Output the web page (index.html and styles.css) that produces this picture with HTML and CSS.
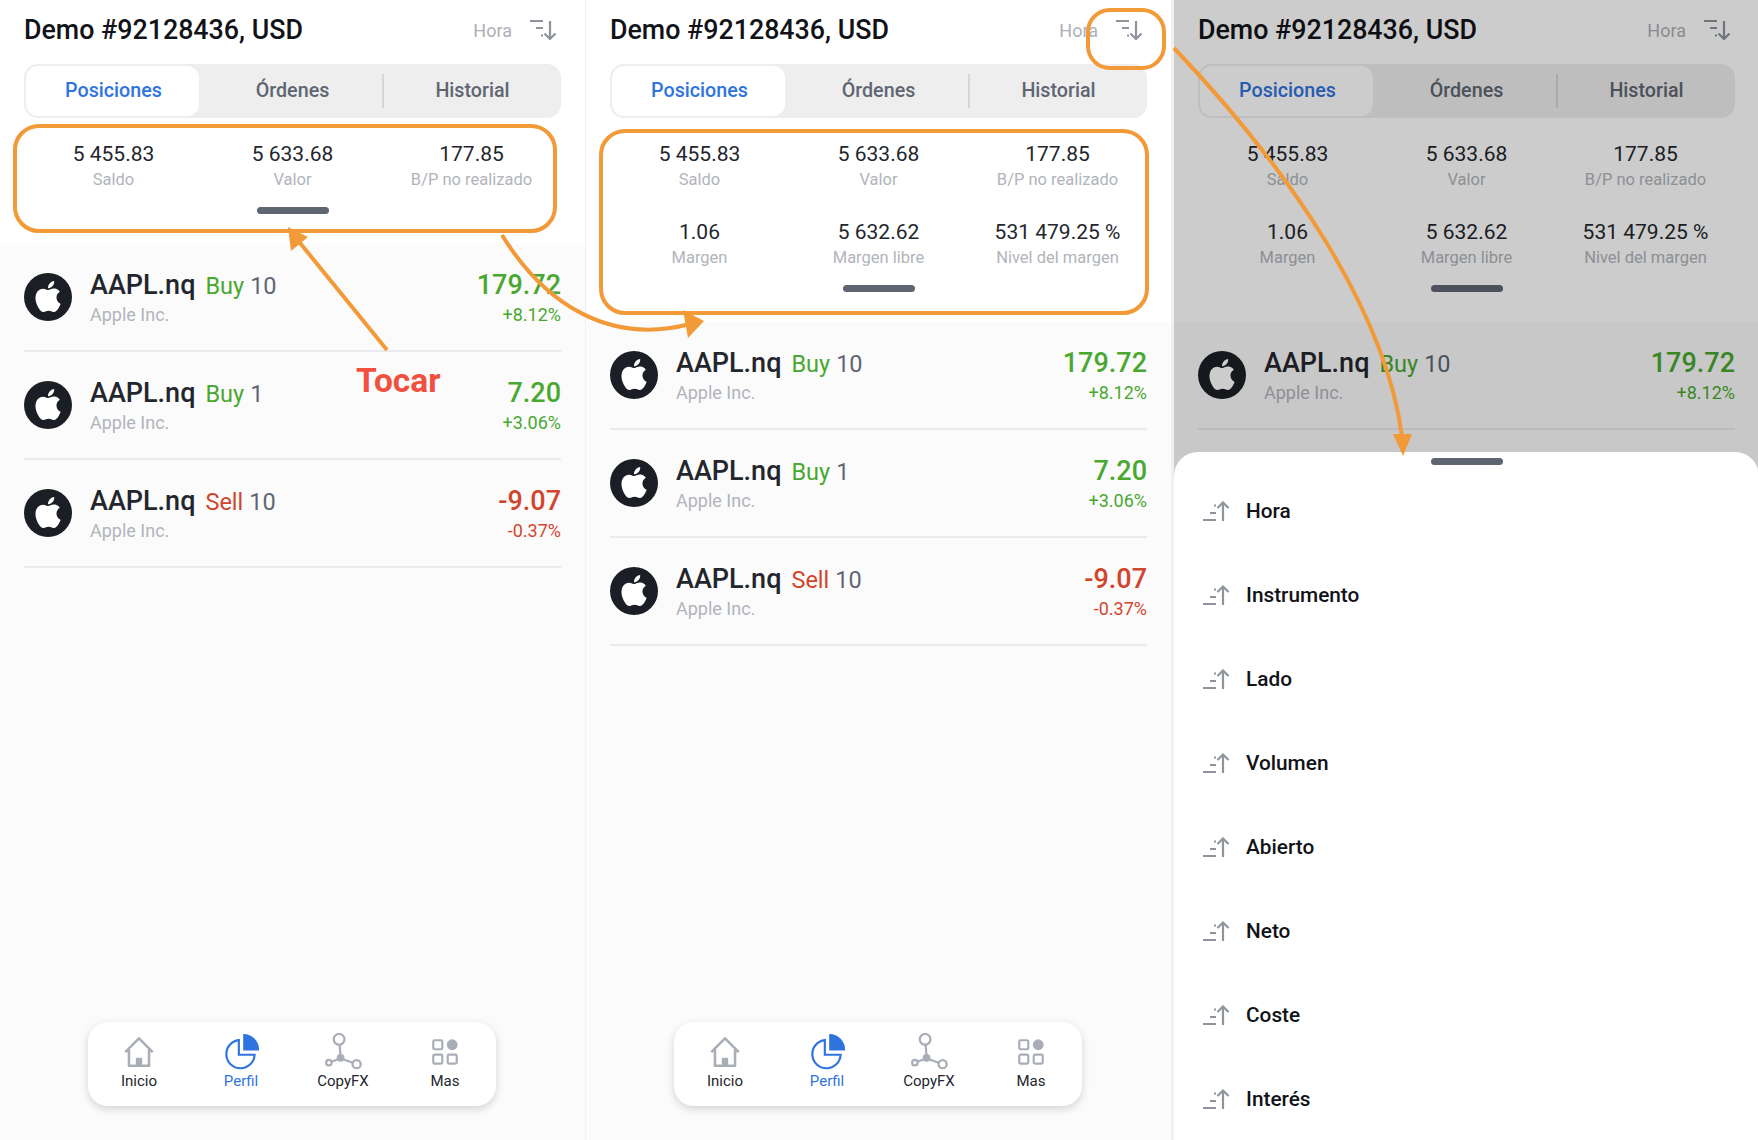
FILE: index.html
```html
<!DOCTYPE html>
<html lang="es">
<head>
    <meta charset="UTF-8">
    <meta name="viewport" content="width=device-width, initial-scale=1.0">
    <title>Posiciones</title>
    <link rel="stylesheet" href="styles.css">
</head>
<body>
    <!-- shared icons -->
    <svg class="icon-defs" width="0" height="0">
        <symbol id="i-apple" viewBox="0 0 48 48">
            <circle cx="24" cy="24" r="24" fill="#1b1e24"/>
            <path transform="translate(5.500 5) scale(1.55)" fill="#fff" d="M18.71 19.5c-.83 1.24-1.71 2.45-3.05 2.47-1.34.03-1.77-.79-3.29-.79-1.53 0-2 .77-3.27.82-1.31.05-2.3-1.32-3.14-2.53C4.25 17 2.94 12.45 4.7 9.39c.87-1.52 2.43-2.48 4.12-2.51 1.28-.02 2.5.87 3.29.87.78 0 2.26-1.07 3.81-.91.65.03 2.47.26 3.64 1.98-.09.06-2.17 1.28-2.15 3.81.03 3.02 2.65 4.03 2.68 4.04-.03.07-.42 1.44-1.38 2.83M13 3.5c.73-.83 1.94-1.46 2.94-1.5.13 1.17-.34 2.35-1.04 3.19-.69.85-1.83 1.51-2.95 1.42-.15-1.15.41-2.35 1.05-3.11z"/>
        </symbol>
        <symbol id="i-sort-down" viewBox="0 0 28 22">
            <g fill="none" stroke="#8e939c" stroke-width="2.200">
                <path d="M1 2h13M7 9h7M12 16.500h2"/>
                <path d="M21 2v18M15.500 14.500l5.500 5.500 5.500-5.500"/>
            </g>
        </symbol>
        <symbol id="i-sort-up" viewBox="0 0 28 22">
            <g fill="none" stroke="#8e939c" stroke-width="2.200">
                <path d="M1 20h13M8 13h6M12 5.500h2"/>
                <path d="M21 21V3M15.500 8l5.500-5.500L26.500 8"/>
            </g>
        </symbol>
        <symbol id="i-home" viewBox="-1.500 -2.500 35 35">
            <path d="M3 15.500 16 2.500l13 13M6.500 13v15.500h19V13" fill="none" stroke="#a9adb7" stroke-width="2.400" stroke-linejoin="round"/>
            <rect x="13" y="21" width="6" height="8" fill="#a9adb7"/>
        </symbol>
        <symbol id="i-profile" viewBox="0 0 34 34">
            <path d="M15 6.500A13 13 0 1 0 29.500 20H15z" fill="none" stroke="#2f74de" stroke-width="2"/>
            <path d="M19 1a14 14 0 0 1 14.500 15H19z" fill="#2f74de"/>
        </symbol>
        <symbol id="i-copy" viewBox="0 0 38 38">
            <g fill="none" stroke="#a9adb7" stroke-width="2.300">
                <circle cx="15" cy="6.500" r="5.500"/>
                <circle cx="33" cy="32" r="4.200"/>
                <circle cx="4.500" cy="30.500" r="2.800"/>
                <path d="M15.500 12l1 12M19 27l10 3.500M14 27l-7 2.500"/>
            </g>
            <circle cx="16.500" cy="25.500" r="4" fill="#a9adb7"/>
        </symbol>
        <symbol id="i-more" viewBox="-5.500 -5 41 41">
            <g fill="none" stroke="#a9adb7" stroke-width="2.400">
                <rect x="2" y="3" width="10" height="10" rx="1.500"/>
                <rect x="2" y="19" width="10" height="10" rx="1.500"/>
                <rect x="18" y="19" width="10" height="10" rx="1.500"/>
            </g>
            <circle cx="23" cy="8" r="6" fill="#a9adb7"/>
        </symbol>
    </svg>

    <main class="screens">

        <!-- collapsed summary -->
        <section class="panel">
            <header class="top-bar">
                <h1 class="account">Demo #92128436, USD</h1>
                <div class="sort"><span class="sort-label">Hora</span><svg class="sort-icon"><use href="#i-sort-down"/></svg></div>
            </header>
            <div class="tabs">
                <div class="tab active">Posiciones</div>
                <div class="tab">Órdenes</div>
                <div class="tab tab-split">Historial</div>
            </div>
            <div class="summary">
                <div class="stats">
                    <div class="stat"><div class="stat-value">5 455.83</div><div class="stat-label">Saldo</div></div>
                    <div class="stat"><div class="stat-value">5 633.68</div><div class="stat-label">Valor</div></div>
                    <div class="stat"><div class="stat-value">177.85</div><div class="stat-label">B/P no realizado</div></div>
                </div>
                <div class="handle"></div>
            </div>
            <div class="positions">
                <div class="position">
                    <svg class="logo"><use href="#i-apple"/></svg>
                    <div class="pos-info">
                        <div class="pos-title"><span class="symbol">AAPL.nq</span><span class="side up">Buy</span><span class="qty">10</span></div>
                        <div class="pos-name">Apple Inc.</div>
                    </div>
                    <div class="pos-result up"><div class="pos-value">179.72</div><div class="pos-pct">+8.12%</div></div>
                </div>
                <div class="position">
                    <svg class="logo"><use href="#i-apple"/></svg>
                    <div class="pos-info">
                        <div class="pos-title"><span class="symbol">AAPL.nq</span><span class="side up">Buy</span><span class="qty">1</span></div>
                        <div class="pos-name">Apple Inc.</div>
                    </div>
                    <div class="pos-result up"><div class="pos-value">7.20</div><div class="pos-pct">+3.06%</div></div>
                </div>
                <div class="position">
                    <svg class="logo"><use href="#i-apple"/></svg>
                    <div class="pos-info">
                        <div class="pos-title"><span class="symbol">AAPL.nq</span><span class="side down">Sell</span><span class="qty">10</span></div>
                        <div class="pos-name">Apple Inc.</div>
                    </div>
                    <div class="pos-result down"><div class="pos-value">-9.07</div><div class="pos-pct">-0.37%</div></div>
                </div>
            </div>
            <nav class="tab-bar">
                <div class="bar-item"><svg class="bar-icon"><use href="#i-home"/></svg>Inicio</div>
                <div class="bar-item active"><svg class="bar-icon"><use href="#i-profile"/></svg>Perfil</div>
                <div class="bar-item"><svg class="bar-icon"><use href="#i-copy"/></svg>CopyFX</div>
                <div class="bar-item"><svg class="bar-icon"><use href="#i-more"/></svg>Mas</div>
            </nav>
        </section>

        <!-- expanded summary -->
        <section class="panel">
            <header class="top-bar">
                <h1 class="account">Demo #92128436, USD</h1>
                <div class="sort"><span class="sort-label">Hora</span><svg class="sort-icon"><use href="#i-sort-down"/></svg></div>
            </header>
            <div class="tabs">
                <div class="tab active">Posiciones</div>
                <div class="tab">Órdenes</div>
                <div class="tab tab-split">Historial</div>
            </div>
            <div class="summary">
                <div class="stats">
                    <div class="stat"><div class="stat-value">5 455.83</div><div class="stat-label">Saldo</div></div>
                    <div class="stat"><div class="stat-value">5 633.68</div><div class="stat-label">Valor</div></div>
                    <div class="stat"><div class="stat-value">177.85</div><div class="stat-label">B/P no realizado</div></div>
                    <div class="stat"><div class="stat-value">1.06</div><div class="stat-label">Margen</div></div>
                    <div class="stat"><div class="stat-value">5 632.62</div><div class="stat-label">Margen libre</div></div>
                    <div class="stat"><div class="stat-value">531 479.25 %</div><div class="stat-label">Nivel del margen</div></div>
                </div>
                <div class="handle"></div>
            </div>
            <div class="positions">
                <div class="position">
                    <svg class="logo"><use href="#i-apple"/></svg>
                    <div class="pos-info">
                        <div class="pos-title"><span class="symbol">AAPL.nq</span><span class="side up">Buy</span><span class="qty">10</span></div>
                        <div class="pos-name">Apple Inc.</div>
                    </div>
                    <div class="pos-result up"><div class="pos-value">179.72</div><div class="pos-pct">+8.12%</div></div>
                </div>
                <div class="position">
                    <svg class="logo"><use href="#i-apple"/></svg>
                    <div class="pos-info">
                        <div class="pos-title"><span class="symbol">AAPL.nq</span><span class="side up">Buy</span><span class="qty">1</span></div>
                        <div class="pos-name">Apple Inc.</div>
                    </div>
                    <div class="pos-result up"><div class="pos-value">7.20</div><div class="pos-pct">+3.06%</div></div>
                </div>
                <div class="position">
                    <svg class="logo"><use href="#i-apple"/></svg>
                    <div class="pos-info">
                        <div class="pos-title"><span class="symbol">AAPL.nq</span><span class="side down">Sell</span><span class="qty">10</span></div>
                        <div class="pos-name">Apple Inc.</div>
                    </div>
                    <div class="pos-result down"><div class="pos-value">-9.07</div><div class="pos-pct">-0.37%</div></div>
                </div>
            </div>
            <nav class="tab-bar">
                <div class="bar-item"><svg class="bar-icon"><use href="#i-home"/></svg>Inicio</div>
                <div class="bar-item active"><svg class="bar-icon"><use href="#i-profile"/></svg>Perfil</div>
                <div class="bar-item"><svg class="bar-icon"><use href="#i-copy"/></svg>CopyFX</div>
                <div class="bar-item"><svg class="bar-icon"><use href="#i-more"/></svg>Mas</div>
            </nav>
        </section>

        <!-- sort sheet open -->
        <section class="panel">
            <header class="top-bar">
                <h1 class="account">Demo #92128436, USD</h1>
                <div class="sort"><span class="sort-label">Hora</span><svg class="sort-icon"><use href="#i-sort-down"/></svg></div>
            </header>
            <div class="tabs">
                <div class="tab active">Posiciones</div>
                <div class="tab">Órdenes</div>
                <div class="tab tab-split">Historial</div>
            </div>
            <div class="summary">
                <div class="stats">
                    <div class="stat"><div class="stat-value">5 455.83</div><div class="stat-label">Saldo</div></div>
                    <div class="stat"><div class="stat-value">5 633.68</div><div class="stat-label">Valor</div></div>
                    <div class="stat"><div class="stat-value">177.85</div><div class="stat-label">B/P no realizado</div></div>
                    <div class="stat"><div class="stat-value">1.06</div><div class="stat-label">Margen</div></div>
                    <div class="stat"><div class="stat-value">5 632.62</div><div class="stat-label">Margen libre</div></div>
                    <div class="stat"><div class="stat-value">531 479.25 %</div><div class="stat-label">Nivel del margen</div></div>
                </div>
                <div class="handle"></div>
            </div>
            <div class="positions">
                <div class="position">
                    <svg class="logo"><use href="#i-apple"/></svg>
                    <div class="pos-info">
                        <div class="pos-title"><span class="symbol">AAPL.nq</span><span class="side up">Buy</span><span class="qty">10</span></div>
                        <div class="pos-name">Apple Inc.</div>
                    </div>
                    <div class="pos-result up"><div class="pos-value">179.72</div><div class="pos-pct">+8.12%</div></div>
                </div>
            </div>
            <div class="scrim"></div>
            <div class="sheet">
                <div class="handle sheet-handle"></div>
                <ul class="sort-list">
                    <li class="sort-item"><svg class="sort-item-icon"><use href="#i-sort-up"/></svg>Hora</li>
                    <li class="sort-item"><svg class="sort-item-icon"><use href="#i-sort-up"/></svg>Instrumento</li>
                    <li class="sort-item"><svg class="sort-item-icon"><use href="#i-sort-up"/></svg>Lado</li>
                    <li class="sort-item"><svg class="sort-item-icon"><use href="#i-sort-up"/></svg>Volumen</li>
                    <li class="sort-item"><svg class="sort-item-icon"><use href="#i-sort-up"/></svg>Abierto</li>
                    <li class="sort-item"><svg class="sort-item-icon"><use href="#i-sort-up"/></svg>Neto</li>
                    <li class="sort-item"><svg class="sort-item-icon"><use href="#i-sort-up"/></svg>Coste</li>
                    <li class="sort-item"><svg class="sort-item-icon"><use href="#i-sort-up"/></svg>Interés</li>
                </ul>
            </div>
        </section>
    </main>

    <!-- orange callouts drawn over the screens -->
    <svg class="callouts" viewBox="0 0 1758 1140">
        <g fill="none" stroke="#f29a38" stroke-width="4">
            <rect x="15" y="126" width="540" height="105" rx="24"/>
            <rect x="601" y="131" width="546" height="182" rx="24"/>
            <rect x="1088" y="10" width="76" height="58" rx="22"/>
            <path d="M387 350 296 238"/>
            <path d="M502 235C545 305 610 345 690 324"/>
            <path d="M1174 48C1290 170 1385 310 1402 436"/>
        </g>
        <g fill="#f29a38">
            <path d="M288 227 308 237 291 251z"/>
            <path d="M704 321 683 310 688 338z"/>
            <path d="M1403 456 1393 434 1412 434z"/>
        </g>
    </svg>
    <div class="tap-note">Tocar</div>
</body>
</html>
```

FILE: styles.css
```css
* {
    margin: 0;
    padding: 0;
    box-sizing: border-box;
}

body {
    width: 1758px;
    height: 1140px;
    overflow: hidden;
    position: relative;
    background-color: #f0f0f1;
    font-family: Roboto, 'Noto Sans', sans-serif;
}

.icon-defs {
    position: absolute;
}

.screens {
    display: flex;
    gap: 1px;
    height: 100%;
}

.panel {
    width: 585px;
    height: 100%;
    flex: none;
    position: relative;
    overflow: hidden;
    background-color: #ffffff;
    display: flex;
    flex-direction: column;
}

.panel:last-child {
    margin-left: 2px;
}

/* Header */
.top-bar {
    height: 64px;
    padding: 0 28px 4px 24px;
    display: flex;
    justify-content: space-between;
    align-items: center;
    flex: none;
}

.account {
    font-size: 26.800px;
    font-weight: 500;
    color: #111318;
}

.sort {
    display: flex;
    align-items: center;
    gap: 17px;
}

.sort-label {
    font-size: 18px;
    color: #adb0b7;
}

.sort-icon {
    width: 28px;
    height: 22px;
}

/* Tabs */
.tabs {
    margin: 0 24px;
    height: 54px;
    background-color: #eeeeee;
    border-radius: 14px;
    display: grid;
    grid-template-columns: repeat(3, 1fr);
    align-items: center;
    flex: none;
}

.tab {
    height: 100%;
    padding-bottom: 2px;
    font-size: 19.700px;
    font-weight: 500;
    color: #5f6672;
    display: flex;
    justify-content: center;
    align-items: center;
}

.tab.active {
    height: 50px;
    margin: 0 4px 0 2px;
    padding-left: 2px;
    background-color: #ffffff;
    border-radius: 12px;
    color: #2f74de;
}

/* the line sits on the left edge of the last tab, shorter than the tab */
.tab-split {
    height: 34px;
    border-left: 2px solid #d4d5d8;
}

/* Summary */
.summary {
    background-color: #ffffff;
    padding: 22px 24px 30px;
    flex: none;
}

.stats {
    display: grid;
    grid-template-columns: repeat(3, 1fr);
    row-gap: 26px;
}

.stat {
    text-align: center;
}

.stat-value {
    font-size: 21px;
    line-height: 28px;
    color: #23262c;
}

.stat-label {
    font-size: 16.500px;
    line-height: 24px;
    color: #b1b4bb;
}

.handle {
    width: 72px;
    height: 7px;
    margin: 15px auto 0;
    border-radius: 3.500px;
    background-color: #5f6672;
}

/* Positions */
.positions {
    padding: 0 24px;
    background-color: #fbfbfc;
    flex: 1;
}

.position {
    height: 108px;
    border-bottom: 2px solid #e9eaee;
    display: flex;
    gap: 18px;
    padding-top: 26px;
}

.logo {
    width: 48px;
    height: 48px;
    margin-top: 3px;
    flex: none;
}

.pos-info {
    flex: 1;
}

.pos-title {
    height: 30px;
    display: flex;
    align-items: baseline;
    line-height: 30px;
}

.symbol {
    font-size: 27px;
    font-weight: 500;
    color: #23262c;
    margin-right: 10px;
}

.side {
    font-size: 23.500px;
    margin-right: 6px;
}

.qty {
    font-size: 23.500px;
    color: #5f6672;
}

.pos-name,
.pos-pct {
    margin-top: 3px;
    font-size: 18px;
    line-height: 24px;
}

.pos-name {
    color: #b1b4bb;
}

.pos-result {
    text-align: right;
}

.pos-value {
    font-size: 27px;
    font-weight: 500;
    line-height: 30px;
}

.up {
    color: #49a82f;
}

.down {
    color: #d2452d;
}

/* Bottom bar */
.tab-bar {
    position: absolute;
    left: 88px;
    bottom: 34px;
    width: 408px;
    height: 84px;
    padding-top: 11px;
    background-color: #ffffff;
    border-radius: 20px;
    box-shadow: 0 3px 8px rgba(0, 0, 0, 0.16);
    display: flex;
}

.bar-item {
    flex: 1;
    display: flex;
    flex-direction: column;
    align-items: center;
    font-size: 15px;
    color: #23262c;
}

.bar-item.active {
    color: #2f74de;
}

.bar-icon {
    width: 38px;
    height: 37px;
    margin-bottom: 2px;
}

/* Sort sheet */
.scrim {
    position: absolute;
    inset: 0;
    background-color: rgba(0, 0, 0, 0.2);
}

.sheet {
    position: absolute;
    left: 0;
    right: 0;
    top: 452px;
    bottom: 0;
    background-color: #ffffff;
    border-radius: 24px 24px 0 0;
}

.sheet-handle {
    margin-top: 6px;
}

.sort-list {
    list-style: none;
    padding: 4px 0 0 28px;
}

.sort-item {
    height: 84px;
    display: flex;
    align-items: center;
    gap: 16px;
    font-size: 20.800px;
    font-weight: 500;
    color: #111318;
}

.sort-item-icon {
    width: 28px;
    height: 22px;
}

/* Callouts */
.callouts {
    position: absolute;
    top: 0;
    left: 0;
    width: 1758px;
    height: 1140px;
    pointer-events: none;
}

.tap-note {
    position: absolute;
    left: 356px;
    top: 361px;
    font-size: 33.500px;
    font-weight: 700;
    color: #f2503f;
}
```
